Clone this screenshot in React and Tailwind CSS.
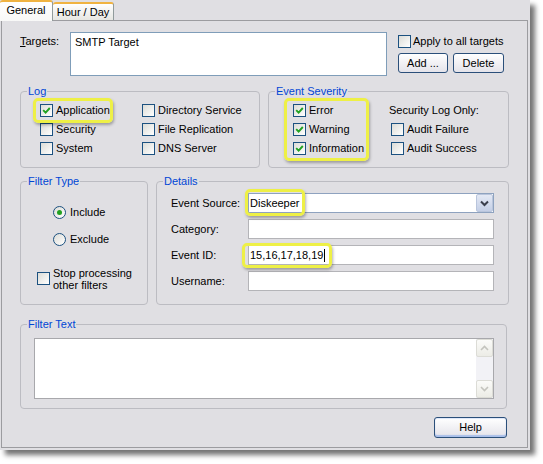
import React from "react";

function Check({ checked }) {
  return (
    <span className="w-[13px] h-[13px] shrink-0 border border-[#1c5180] bg-linear-to-br from-[#dcdcd7] to-white flex items-center justify-center">
      {checked && (
        <svg width="9" height="9" viewBox="0 0 9 9">
          <path d="M1.2 4.2 L3.6 6.6 L7.8 2" stroke="#21a121" strokeWidth="1.9" fill="none" />
        </svg>
      )}
    </span>
  );
}

function Radio({ checked }) {
  return (
    <span className="w-[13px] h-[13px] shrink-0 rounded-full border border-[#1c5180] bg-linear-to-br from-[#dcdcd7] to-white flex items-center justify-center">
      {checked && <span className="w-[5px] h-[5px] rounded-full bg-[#21a121]" />}
    </span>
  );
}

function CB({ checked, children }) {
  return (
    <div className="flex items-center gap-[3px] h-[19px]">
      <Check checked={checked} />
      <span>{children}</span>
    </div>
  );
}

function Highlight({ cls }) {
  return (
    <div
      className={
        "absolute rounded-[5px] border-[3px] border-[#eef046] shadow-[1px_2px_3px_rgba(0,0,0,0.3)] pointer-events-none " +
        cls
      }
    />
  );
}

function Group({ title, cls, children }) {
  return (
    <fieldset className={"border border-[#bcbcc2] rounded-[4px] p-0 m-0 " + cls}>
      <legend className="ml-[6px] px-[1px] text-[#0046d5] leading-[13px]">{title}</legend>
      {children}
    </fieldset>
  );
}

function Btn({ cls, children }) {
  return (
    <div
      className={
        "rounded-[3px] border border-[#2b4f7a] bg-linear-to-b from-white to-[#e4e3ea] flex items-center justify-center " +
        cls
      }
    >
      {children}
    </div>
  );
}

export default function App() {
  return (
    <div className="w-[543px] h-[464px] bg-white overflow-hidden font-['Liberation_Sans',Arial,sans-serif] text-[11px] leading-[13px] text-black">
      <div className="w-[530px] h-[450px] bg-[#e0dfe3] shadow-[5px_5px_5px_rgba(0,0,0,0.55)] flex flex-col">
        {/* Tabs */}
        <div className="flex h-[20px] items-start">
          <div className="relative z-10 w-[53px] h-[21px] border-r border-[#919b9c] border-t-[2px] border-t-[#f0b341] rounded-t-[3px] bg-linear-to-b from-white to-[#f8f8f7] flex items-center justify-center pb-[2px]">
            General
          </div>
          <div className="mt-[2px] w-[61px] h-[18px] border-r border-[#919b9c] border-t-[2px] border-t-[#f0b341] rounded-t-[3px] bg-linear-to-b from-white to-[#e6e6e2] flex items-center justify-center">
            Hour / Day
          </div>
        </div>

        {/* Panel */}
        <div className="ml-[1px] w-[527px] h-[428px] border border-[#9c9ca0] flex flex-col">
          {/* Targets row */}
          <div className="flex mt-[11px] ml-[18px]">
            <div className="w-[50px] pt-[3px]">
              <span className="underline">T</span>argets:
            </div>
            <div className="w-[317px] h-[44px] border border-[#7f9db9] bg-white pl-[4px] pt-[3px]">SMTP Target</div>
            <div className="ml-[11px] pt-[3px] flex flex-col">
              <div className="flex items-center gap-[2px] h-[13px]">
                <Check />
                <span>Apply to all targets</span>
              </div>
              <div className="flex gap-[5px] mt-[5px]">
                <Btn cls="w-[50px] h-[20px]">Add ...</Btn>
                <Btn cls="w-[51px] h-[20px]">Delete</Btn>
              </div>
            </div>
          </div>

          {/* Log / Event Severity */}
          <div className="flex gap-[8px] mt-[9px] ml-[18px]">
            <Group title="Log" cls="w-[240px] h-[83px]">
              <div className="grid grid-cols-[102px_1fr] pl-[19px] pt-[3px]">
                <div className="relative">
                  <CB checked>Application</CB>
                  <Highlight cls="left-[-7px] top-[-3px] w-[80px] h-[25px]" />
                </div>
                <CB>Directory Service</CB>
                <CB>Security</CB>
                <CB>File Replication</CB>
                <CB>System</CB>
                <CB>DNS Server</CB>
              </div>
            </Group>
            <Group title="Event Severity" cls="w-[241px] h-[83px]">
              <div className="flex pl-[24px] pt-[3px]">
                <div className="relative w-[98px] flex flex-col">
                  <CB checked>Error</CB>
                  <CB checked>Warning</CB>
                  <CB checked>Information</CB>
                  <Highlight cls="left-[-9px] top-[-3px] w-[85px] h-[63px]" />
                </div>
                <div className="flex flex-col">
                  <div className="h-[19px] flex items-center ml-[-2px]">Security Log Only:</div>
                  <CB>Audit Failure</CB>
                  <CB>Audit Success</CB>
                </div>
              </div>
            </Group>
          </div>

          {/* Filter Type / Details */}
          <div className="flex gap-[8px] mt-[7px] ml-[18px]">
            <Group title="Filter Type" cls="w-[128px] h-[130px]">
              <div className="pl-[16px] pt-[17px] flex flex-col">
                <div className="ml-[16px] h-[14px] flex items-center gap-[4px]">
                  <Radio checked />
                  <span>Include</span>
                </div>
                <div className="ml-[16px] mt-[13px] h-[14px] flex items-center gap-[4px]">
                  <Radio />
                  <span>Exclude</span>
                </div>
                <div className="mt-[21px] flex items-start gap-[3px]">
                  <span className="mt-[5px]">
                    <Check />
                  </span>
                  <span className="leading-[12px]">
                    Stop processing
                    <br />
                    other filters
                  </span>
                </div>
              </div>
            </Group>
            <Group title="Details" cls="w-[353px] h-[130px]">
              <div className="pl-[14px] pt-[5px] flex flex-col gap-[6px]">
                <div className="flex items-center h-[20px]">
                  <div className="w-[77px]">Event Source:</div>
                  <div className="relative w-[246px] h-[20px] border border-[#8ea2bf] bg-white flex items-center justify-between">
                    <span className="pl-[1px]">Diskeeper</span>
                    <div className="w-[17px] h-[18px] border border-[#b9c5dc] rounded-[2px] bg-linear-to-b from-[#e4e9f5] to-[#c4cfe6] flex items-center justify-center">
                      <svg width="9" height="7" viewBox="0 0 9 7">
                        <path d="M1 1.5 L4.5 5 L8 1.5" stroke="#3a3f4d" strokeWidth="2" fill="none" />
                      </svg>
                    </div>
                    <Highlight cls="left-[-4px] top-[-5px] w-[60px] h-[27px]" />
                  </div>
                </div>
                <div className="flex items-center h-[20px]">
                  <div className="w-[77px]">Category:</div>
                  <div className="w-[246px] h-[20px] border border-[#b4b4b8] bg-white" />
                </div>
                <div className="flex items-center h-[20px]">
                  <div className="w-[77px]">Event ID:</div>
                  <div className="relative w-[246px] h-[20px] border border-[#b4b4b8] bg-white flex items-center">
                    <span className="pl-[1px]">15,16,17,18,19</span>
                    <span className="w-px h-[13px] bg-black ml-[1px]" />
                    <Highlight cls="left-[-7px] top-[-3px] w-[90px] h-[25px]" />
                  </div>
                </div>
                <div className="flex items-center h-[20px]">
                  <div className="w-[77px]">Username:</div>
                  <div className="w-[246px] h-[20px] border border-[#b4b4b8] bg-white" />
                </div>
              </div>
            </Group>
          </div>

          {/* Filter Text */}
          <div className="flex mt-[13px] ml-[18px]">
            <Group title="Filter Text" cls="w-[487px] h-[91px]">
              <div className="pl-[13px] pt-[7px]">
                <div className="w-[460px] h-[61px] border border-[#a8a8ac] bg-white flex justify-end">
                  <div className="w-[17px] h-full bg-[#f2f2f6] flex flex-col justify-between">
                    <div className="h-[18px] border border-[#dcdcd6] rounded-[2px] bg-linear-to-b from-[#fbfbf9] to-[#ecece6] flex items-center justify-center">
                      <svg width="9" height="6" viewBox="0 0 9 6">
                        <path d="M1 5 L4.5 1.5 L8 5" stroke="#c4c4be" strokeWidth="1.6" fill="none" />
                      </svg>
                    </div>
                    <div className="h-[18px] border border-[#dcdcd6] rounded-[2px] bg-linear-to-b from-[#fbfbf9] to-[#ecece6] flex items-center justify-center">
                      <svg width="9" height="6" viewBox="0 0 9 6">
                        <path d="M1 1 L4.5 4.5 L8 1" stroke="#c4c4be" strokeWidth="1.6" fill="none" />
                      </svg>
                    </div>
                  </div>
                </div>
              </div>
            </Group>
          </div>

          {/* Help */}
          <div className="flex justify-end mt-[8px] mr-[20px]">
            <Btn cls="w-[73px] h-[21px] border-[#1d3f8a] shadow-[inset_0_-2px_1px_#a9bfea,inset_0_1px_0_#dfe8fa]">Help</Btn>
          </div>
        </div>
      </div>
    </div>
  );
}
